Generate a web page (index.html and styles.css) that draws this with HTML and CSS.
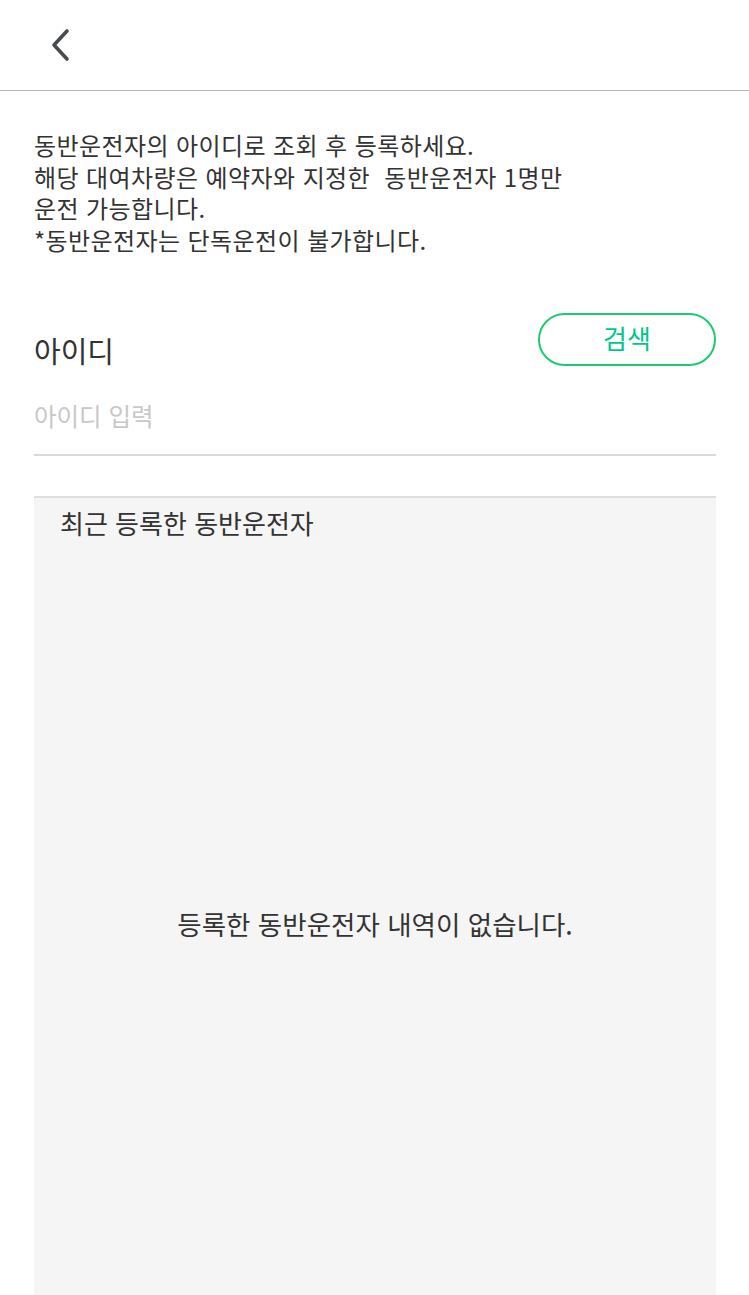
FILE: index.html
```html
<!DOCTYPE html>
<html lang="ko">
<head>
  <meta charset="UTF-8" />
  <meta name="viewport" content="width=device-width, initial-scale=1.0"/>
  <title>동반운전자 등록</title>
  <link rel="stylesheet" href="styles.css">
</head>
<body>
  <div class="header">
    <button class="back" aria-label="뒤로">
      <svg width="24" height="36" viewBox="0 0 24 36">
        <path d="M21 4 L8 18 L21 32" fill="none" stroke="#474c50" stroke-width="3.6" stroke-linecap="round" stroke-linejoin="round"/>
      </svg>
    </button>
  </div>

  <div class="content">
    <p class="notice">
      동반운전자의 아이디로 조회 후 등록하세요.<br>
      해당 대여차량은 예약자와 지정한&nbsp; 동반운전자 1명만<br>
      운전 가능합니다.<br>
      *동반운전자는 단독운전이 불가합니다.
    </p>

    <div class="field">
      <div class="field-head">
        <label class="label" for="userId">아이디</label>
        <button class="search">검색</button>
      </div>
      <input class="input" id="userId" type="text" placeholder="아이디 입력">
    </div>

    <div class="recent">
      <div class="recent-title">최근 등록한 동반운전자</div>
      <div class="empty">등록한 동반운전자 내역이 없습니다.</div>
    </div>
  </div>
</body>
</html>
```

FILE: styles.css
```css
html, body {
  margin: 0;
  padding: 0;
  height: 100%;
}
body {
  font-family: "Noto Sans CJK KR", "Noto Sans", sans-serif;
  background-color: #fff;
  color: #333;
  display: flex;
  flex-direction: column;
}
.header {
  height: 90px;
  border-bottom: 1px solid #b4b4b4;
  display: flex;
  align-items: center;
  flex-shrink: 0;
}
.back {
  margin-left: 46px;
  padding: 0;
  border: none;
  background: none;
  display: flex;
  cursor: pointer;
}
.content {
  flex: 1;
  display: flex;
  flex-direction: column;
  padding: 0 33px 0 34px;
}
.notice {
  margin: 38px 0 0;
  font-size: 24px;
  line-height: 31.5px;
  letter-spacing: 0.4px;
  color: #333;
}
.field {
  margin-top: 58px;
}
.field-head {
  display: flex;
  justify-content: space-between;
  align-items: flex-start;
  height: 57px;
}
.label {
  font-size: 29px;
  color: #333;
  margin-top: 17px;
  line-height: 40px;
}
.search {
  width: 178px;
  height: 53px;
  border: 2px solid #1dcb6e;
  border-radius: 27px;
  background: #fff;
  color: #00c88a;
  font-family: inherit;
  font-size: 26px;
  padding: 0 0 4px;
  cursor: pointer;
}
.input {
  display: block;
  width: 100%;
  box-sizing: border-box;
  margin-top: 29px;
  border: none;
  border-bottom: 2px solid #d9d9d9;
  padding: 0 0 21px;
  font-family: inherit;
  font-size: 24.5px;
  line-height: 34px;
  color: #333;
  outline: none;
  background: none;
}
.input::placeholder {
  color: #c8c8c8;
}
.recent {
  flex: 1;
  margin-top: 40px;
  background-color: #f5f5f5;
  border-top: 2px solid #dedede;
  display: flex;
  flex-direction: column;
}
.recent-title {
  font-size: 26px;
  line-height: 34px;
  padding: 8px 0 0 26px;
  color: #333;
}
.empty {
  flex: 1;
  display: flex;
  justify-content: center;
  align-items: center;
  font-size: 26.5px;
  color: #333;
  padding-top: 11px;
}
```
